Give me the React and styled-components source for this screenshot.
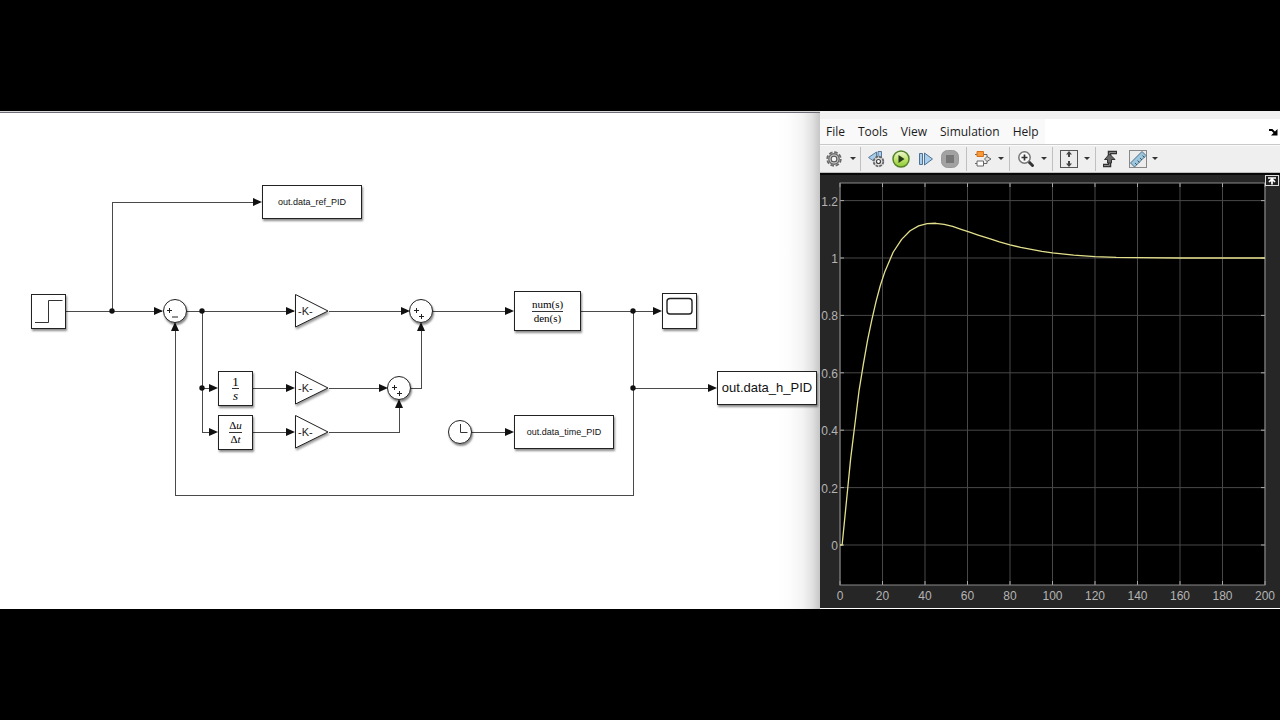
import styled, { createGlobalStyle, css } from 'styled-components';

const GlobalStyle = createGlobalStyle`
  * {
    box-sizing: border-box;
  }
  body {
    margin: 0;
    background: #000;
    font-family: "Liberation Sans", Arial, sans-serif;
  }
`;

const Page = styled.main`
  min-height: 100vh;
  display: flex;
  align-items: center;
`;

const Workspace = styled.div`
  width: 100%;
  display: grid;
  grid-template-columns: minmax(0, 41fr) minmax(0, 23fr);
  background: #fff;
`;

const ModelPane = styled.section`
  border-top: 1px solid #d8d8d8;
  background: linear-gradient(to left, #c6c6c6, #e2e2e2 8px, #f4f4f4 18px, #fdfdfd 32px, #fff 44px);
  overflow: hidden;
`;

const ModelCanvas = styled.div`
  position: relative;
  height: 100%;
  border-top: 1px solid #6e6e76;
`;

const Wires = styled.svg`
  position: absolute;
  top: 0;
  left: 0;
  width: 820px;
  height: 496px;
`;

const Block = styled.div`
  position: absolute;
  left: ${({ $x }) => $x}px;
  top: ${({ $y }) => $y}px;
  width: ${({ $w }) => $w || 35}px;
  height: ${({ $h }) => $h || 35}px;
  display: flex;
  flex-direction: column;
  align-items: center;
  justify-content: center;
  background: #fff;
  border: 1px solid #222;
  box-shadow: 1px 2px 2px rgba(0, 0, 0, 0.45);
  color: #111;
  font-size: ${({ $size }) => $size || 9}px;
  line-height: 14px;
  white-space: nowrap;

  ${({ $round }) => $round && css`
    width: 24px;
    height: 24px;
    border-radius: 50%;
  `}
`;

const Fraction = styled.div`
  display: flex;
  flex-direction: column;
  align-items: center;
  font-family: "Liberation Serif", "Times New Roman", serif;
  font-size: ${({ $size }) => $size || 13}px;
  line-height: 13px;
  color: #000;
`;

const Numerator = styled.span`
  border-bottom: 1px solid #333;
`;

const GainBlock = styled.div`
  position: absolute;
  left: 294px;
  top: ${({ $y }) => $y}px;
  width: 36px;
  height: 36px;
  display: flex;
  align-items: center;
  padding-left: 4px;
  font-size: 11px;
  line-height: 14px;
  color: #222;
`;

const GainShape = styled.svg`
  position: absolute;
  inset: 0;
  overflow: visible;
  filter: drop-shadow(1px 2px 1px rgba(0, 0, 0, 0.4));
`;

const GainLabel = styled.span`
  position: relative;
`;

const ScopeWindow = styled.section`
  display: flex;
  flex-direction: column;
  min-width: 0;
  background: #262626;
  border-bottom: 1px solid #fff;
`;

const TitleStrip = styled.div`
  height: 8px;
  background: #f1f1f1;
`;

const MenuBar = styled.nav`
  display: flex;
  align-items: center;
  justify-content: space-between;
  height: 25px;
  background: #fff;
`;

const MenuList = styled.div`
  display: flex;
  align-items: center;
  gap: 13px;
  height: 25px;
  padding: 0 6px;
  background: #f9f9f9;
`;

const MenuButton = styled.button`
  border: 0;
  padding: 0;
  background: none;
  color: #1b1b1b;
  font: 12px/18px "Open Sans", "Noto Sans", sans-serif;
`;

const DockButton = styled.button`
  display: flex;
  padding: 0 2px 0 0;
  border: 0;
  background: none;
`;

const Toolbar = styled.div`
  display: flex;
  align-items: center;
  height: 29px;
  padding-left: 3px;
  background: #efefef;
  border-top: 1px solid #c9c9c9;
  border-bottom: 1px solid #bdbdbd;
  box-shadow: inset 0 1px #fafafa;
`;

const ToolButton = styled.button`
  display: flex;
  align-items: center;
  justify-content: center;
  flex: none;
  width: ${({ $w }) => $w || 31}px;
  height: 26px;
  padding: 0;
  border: 0;
  background: none;
`;

const DropButton = styled(ToolButton)`
  justify-content: flex-start;
  width: 11px;
`;

const Caret = styled.span`
  border: 3px solid transparent;
  border-top-color: #333;
  border-bottom: 0;
`;

const Divider = styled.span`
  width: 1px;
  height: 24px;
  background: #c0c0c0;
`;

const Plot = styled.svg`
  display: block;
  width: 100%;
  border-top: 2px solid #080808;
`;

const Tick = styled.text`
  font: 12px "Liberation Sans", Arial, sans-serif;
  fill: #b4b4b4;
`;

const wires = [
  'M66 198H162',
  'M112 198V89H254',
  'M186 198H294',
  'M202 198V319H210',
  'M202 275H210',
  'M329 198H402',
  'M252 275H287',
  'M252 319H287',
  'M329 275H380',
  'M329 319H399V293',
  'M411 275H421V216',
  'M433 198H507',
  'M581 198H655',
  'M633 198V382H175V216',
  'M633 275H709',
  'M471 319H507',
];

const rightArrows = [
  [163, 198], [262, 89], [295, 198], [218, 275], [218, 319], [295, 275], [295, 319],
  [410, 198], [388, 275], [514, 198], [662, 198], [717, 275], [514, 319],
];
const upArrows = [[175, 209], [421, 209], [399, 286]];
const junctions = [[112, 198], [202, 198], [202, 275], [633, 198], [633, 275]];

const sums = [
  { x: 163, y: 186, signs: 'M3 10.500h5M5.500 8v5M8 17h6' },
  { x: 409, y: 186, signs: 'M4 10.500h5M6.500 8v5M9 16.500h5M11.500 14v5' },
  { x: 387, y: 263, signs: 'M4 10.500h5M6.500 8v5M9 16.500h5M11.500 14v5' },
];

function Gain({ y }) {
  return (
    <GainBlock $y={y}>
      <GainShape viewBox="0 0 36 36">
        <path d="M1.500 1.500V34L34 18Z" fill="#fff" stroke="#222" />
      </GainShape>
      <GainLabel>-K-</GainLabel>
    </GainBlock>
  );
}

function Model() {
  return (
    <ModelPane aria-label="PID model">
      <ModelCanvas>
        <Wires viewBox="0 0 820 496">
          <g fill="none" stroke="#4a4a4a" shapeRendering="crispEdges">
            {wires.map((d) => <path key={d} d={d} />)}
          </g>
          <g fill="#111">
            {rightArrows.map(([x, y]) => <path key={`${x}-${y}`} d={`M${x} ${y}l-9-4v8z`} />)}
            {upArrows.map(([x, y]) => <path key={`${x}-${y}`} d={`M${x} ${y}l-4 9h8z`} />)}
            {junctions.map(([x, y]) => <circle key={`${x}-${y}`} cx={x} cy={y} r="2.700" />)}
          </g>
        </Wires>

        <Block $x={262} $y={72} $w={100} $h={34}>out.data_ref_PID</Block>
        <Block $x={31} $y={181}>
          <svg width="33" height="33" fill="none" stroke="#333">
            <path d="M3 27.500h13.500v-22h14" />
          </svg>
        </Block>

        {sums.map(({ x, y, signs }) => (
          <Block key={x} $x={x} $y={y} $round>
            <svg width="22" height="22" fill="none" stroke="#222"><path d={signs} /></svg>
          </Block>
        ))}

        <Gain y={180} />
        <Gain y={257} />
        <Gain y={301} />

        <Block $x={218} $y={258}>
          <Fraction>
            <Numerator>1</Numerator>
            <i>s</i>
          </Fraction>
        </Block>
        <Block $x={218} $y={302}>
          <Fraction $size={11}>
            <Numerator>Δ<i>u</i></Numerator>
            <span>Δ<i>t</i></span>
          </Fraction>
        </Block>

        <Block $x={514} $y={178} $w={67} $h={40}>
          <Fraction $size={11}>
            <Numerator>num(s)</Numerator>
            <span>den(s)</span>
          </Fraction>
        </Block>
        <Block $x={662} $y={180} $h={36}>
          <svg width="33" height="34" fill="none" stroke="#222">
            <rect x="4" y="4.500" width="25" height="15.500" rx="3" strokeWidth="1.400" />
          </svg>
        </Block>
        <Block $x={717} $y={258} $w={100} $h={34} $size={13}>out.data_h_PID</Block>
        <Block $x={448} $y={307} $round>
          <svg width="22" height="22" fill="none" stroke="#333"><path d="M11.500 3v8.500h7" /></svg>
        </Block>
        <Block $x={514} $y={302} $w={100} $h={34}>out.data_time_PID</Block>
      </ModelCanvas>
    </ModelPane>
  );
}

function GearIcon() {
  return (
    <svg width="18" height="18" viewBox="0 0 18 18" fill="none">
      <circle cx="9" cy="9" r="6.800" stroke="#6a6a6a" strokeWidth="1.800" strokeDasharray="3.600 1.740" />
      <circle cx="9" cy="9" r="5.200" fill="#d6d6d6" stroke="#6a6a6a" strokeWidth="1.400" />
      <circle cx="9" cy="9" r="2.900" fill="#f5f5f5" stroke="#5a5a5a" strokeWidth="1.200" />
    </svg>
  );
}

function StepBackIcon() {
  return (
    <svg width="18" height="18" viewBox="0 0 18 18" fill="none">
      <path d="M9.500 2L1.500 7.500l8 5.500z" fill="#a9cce8" stroke="#56799b" />
      <path d="M11 1.500h3.500v7h-3.500z" fill="#a9cce8" stroke="#56799b" />
      <circle cx="11.500" cy="11.500" r="4.800" fill="#ddd" stroke="#666" strokeWidth="1.800" strokeDasharray="2.800 0.970" />
      <circle cx="11.500" cy="11.500" r="2" fill="#fff" stroke="#444" strokeWidth="1.200" />
    </svg>
  );
}

function RunIcon() {
  return (
    <svg width="18" height="18" viewBox="0 0 18 18">
      <defs>
        <linearGradient id="runFill" x2="0" y2="1">
          <stop stopColor="#f1f8d7" />
          <stop offset="0.500" stopColor="#c3e573" />
          <stop offset="1" stopColor="#8cc832" />
        </linearGradient>
      </defs>
      <circle cx="9" cy="9" r="8" fill="url(#runFill)" stroke="#54822b" strokeWidth="1.500" />
      <path d="M6.500 5v8L12.500 9z" fill="#263a18" />
    </svg>
  );
}

function StepIcon() {
  return (
    <svg width="16" height="16" viewBox="0 0 16 16" fill="#a9cfec" stroke="#4f7194">
      <path d="M1.500 2.500h3v11h-3zM6.500 2v12l8-6z" />
    </svg>
  );
}

function StopIcon() {
  return (
    <svg width="18" height="18" viewBox="0 0 18 18">
      <rect x="0.500" y="0.500" width="17" height="17" rx="6" fill="#a2a2a2" stroke="#999" />
      <path d="M5 5h8v8H5z" fill="#777" />
    </svg>
  );
}

function BlocksIcon() {
  return (
    <svg width="18" height="18" viewBox="0 0 18 18" fill="none" stroke="#666">
      <path d="M1 4.500h2M9 4.500h4V8M1 13.500h2M9 13.500h4V10" />
      <path d="M3 1.500h6.500v5H3z" fill="#f79a3c" stroke="#d5701a" />
      <path d="M3 11h6.500v5H3z" fill="#fff" />
      <path d="M10.500 9L13 6.500 17 9l-4 2.500z" fill="#ddd" />
    </svg>
  );
}

function ZoomIcon() {
  return (
    <svg width="18" height="18" viewBox="0 0 18 18" fill="none" stroke="#333">
      <path d="M11.500 11.500l4 4" strokeWidth="3" strokeLinecap="round" />
      <circle cx="7.500" cy="7.500" r="5.700" fill="#fafafa" stroke="#777" strokeWidth="1.500" />
      <path d="M4.500 7.500h6M7.500 4.500v6" strokeWidth="1.700" />
    </svg>
  );
}

function FitIcon() {
  return (
    <svg width="18" height="18" viewBox="0 0 18 18">
      <rect x="0.500" y="0.500" width="17" height="17" fill="#ececec" stroke="#555" />
      <path d="M9 1L6 4.500h2V7h2V4.500h2zM9 17l-3-3.500h2V11h2v2.500h2z" fill="#444" />
    </svg>
  );
}

function TriggerIcon() {
  return (
    <svg width="16" height="18" viewBox="0 0 16 18" fill="none">
      <path d="M1 15.500h6.500V2.500H15" stroke="#333" strokeWidth="3.500" />
      <path d="M2 15.500h5.500V2.500H14" stroke="#888" />
      <path d="M7.500 4L2.500 9.500h3v3.500h4V9.500h3.500z" fill="#666" stroke="#333" />
    </svg>
  );
}

function MeasureIcon() {
  return (
    <svg width="18" height="18" viewBox="0 0 18 18">
      <rect x="0.500" y="0.500" width="17" height="17" fill="#ececec" stroke="#888" />
      <path d="M1.500 13L13 1.500l4 4L5.500 17z" fill="#9cc6de" stroke="#4e7086" />
      <path d="M8 15l-2-2M10.500 12.500l-2-2M13 10l-2-2M15.500 7.500l-2-2" stroke="#365a70" />
    </svg>
  );
}

function DropDown({ label }) {
  return (
    <DropButton aria-label={`${label} options`}><Caret /></DropButton>
  );
}

// sampled step response: time in seconds, level
const response = [
  [0, 0], [1, 0], [3, 0.15], [5, 0.3], [7, 0.42], [9, 0.54], [11, 0.63], [13, 0.715],
  [15, 0.785], [17, 0.85], [19, 0.905], [21, 0.95], [25, 1.02], [29, 1.065], [33, 1.095],
  [37, 1.112], [41, 1.12], [45, 1.121], [49, 1.117], [53, 1.11], [57, 1.1], [61, 1.09],
  [65, 1.08], [70, 1.068], [75, 1.056], [80, 1.046], [85, 1.037], [90, 1.03], [95, 1.023],
  [100, 1.018], [110, 1.01], [120, 1.005], [130, 1.002], [140, 1.001], [160, 1], [200, 1],
];

const plotX = (t) => 20 + t * 2.125;
const plotY = (v) => 370 - v * 287;

function ScopePlot() {
  const times = [0, 20, 40, 60, 80, 100, 120, 140, 160, 180, 200];
  const levels = [0, 0.2, 0.4, 0.6, 0.8, 1, 1.2];
  return (
    <Plot viewBox="0 0 460 433" role="img" aria-label="Step response">
      <rect x="20" y="8" width="425" height="402" fill="#000" />
      {times.map((t) => (
        <g key={t} stroke="#484848">
          <path d={`M${plotX(t)} 8V410`} />
          <path d={`M${plotX(t)} 8v4M${plotX(t)} 406v4`} stroke="#aaa" />
          <Tick x={plotX(t)} y="425" textAnchor="middle" stroke="none">{t}</Tick>
        </g>
      ))}
      {levels.map((v) => (
        <g key={v} stroke="#484848">
          <path d={`M20 ${plotY(v)}H445`} />
          <path d={`M20 ${plotY(v)}h4M441 ${plotY(v)}h4`} stroke="#aaa" />
          <Tick x="18" y={plotY(v) + 5} textAnchor="end" stroke="none">{v}</Tick>
        </g>
      ))}
      <rect x="20" y="8" width="425" height="402" fill="none" stroke="#8a8a8a" />
      <polyline
        points={response.map(([t, v]) => `${plotX(t)},${plotY(v)}`).join(' ')}
        fill="none"
        stroke="#e3e08c"
        strokeWidth="1.300"
        strokeLinejoin="round"
      />
      <rect x="445.500" y="0.500" width="13" height="10" fill="#222" stroke="#ddd" />
      <path d="M448 3h8M452 9.500V4M449 7l3-3 3 3" fill="none" stroke="#fff" strokeWidth="1.700" />
    </Plot>
  );
}

function Scope() {
  return (
    <ScopeWindow aria-label="Scope">
      <TitleStrip />
      <MenuBar>
        <MenuList>
          {['File', 'Tools', 'View', 'Simulation', 'Help'].map((name) => (
            <MenuButton key={name}>{name}</MenuButton>
          ))}
        </MenuList>
        <DockButton aria-label="Dock">
          <svg width="9" height="8" viewBox="0 0 9 8">
            <path d="M0 2h3l3 3" fill="none" stroke="#000" strokeWidth="1.800" />
            <path d="M8.500 1v6.500H2z" />
          </svg>
        </DockButton>
      </MenuBar>
      <Toolbar>
        <ToolButton $w={22} aria-label="Configuration"><GearIcon /></ToolButton>
        <ToolButton $w={15} aria-label="Configuration options"><Caret /></ToolButton>
        <Divider />
        <ToolButton $w={29} aria-label="Step back"><StepBackIcon /></ToolButton>
        <ToolButton $w={22} aria-label="Run"><RunIcon /></ToolButton>
        <ToolButton $w={27} aria-label="Step forward"><StepIcon /></ToolButton>
        <ToolButton $w={22} aria-label="Stop"><StopIcon /></ToolButton>
        <ToolButton $w={5} as="span" />
        <Divider />
        <ToolButton aria-label="Highlight block"><BlocksIcon /></ToolButton>
        <DropDown label="Highlight" />
        <Divider />
        <ToolButton aria-label="Zoom"><ZoomIcon /></ToolButton>
        <DropDown label="Zoom" />
        <Divider />
        <ToolButton aria-label="Scale axes"><FitIcon /></ToolButton>
        <DropDown label="Scale axes" />
        <Divider />
        <ToolButton $w={28} aria-label="Triggers"><TriggerIcon /></ToolButton>
        <ToolButton $w={28} aria-label="Measurements"><MeasureIcon /></ToolButton>
        <DropDown label="Measurements" />
      </Toolbar>
      <ScopePlot />
    </ScopeWindow>
  );
}

export default function App() {
  return (
    <>
      <GlobalStyle />
      <Page>
        <Workspace>
          <Model />
          <Scope />
        </Workspace>
      </Page>
    </>
  );
}
